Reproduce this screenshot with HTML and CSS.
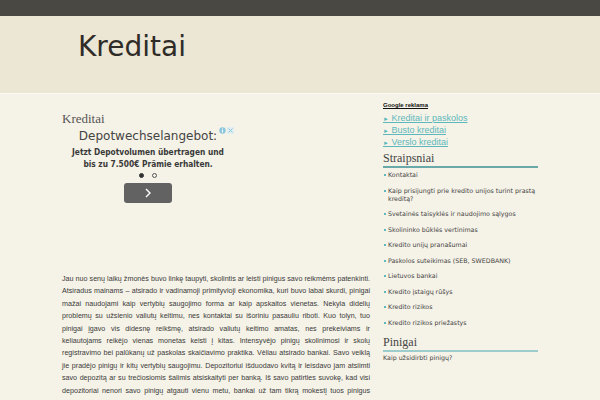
FILE: index.html
```html
<!DOCTYPE html>
<html lang="lt">
<head>
  <meta charset="UTF-8" />
  <meta name="viewport" content="width=device-width, initial-scale=1.0" />
  <title>Kreditai</title>
  <link rel="stylesheet" href="styles.css">
</head>
<body>
  <div class="topbar"></div>

  <header class="header">
    <div class="site-title">Kreditai</div>
  </header>

  <div class="page">
    <main class="content">
      <h2 class="post-title">Kreditai</h2>

      <div class="ad">
        <span class="ad-badge">
          <svg width="7" height="7" viewBox="0 0 7 7"><circle cx="3.5" cy="3.5" r="3.2" fill="#8cc6dc"/><rect x="3" y="3" width="1" height="2.5" fill="#fff"/><rect x="3" y="1.4" width="1" height="1" fill="#fff"/></svg>
          <svg width="7" height="7" viewBox="0 0 7 7"><rect width="7" height="7" fill="#e3eef0"/><path d="M1.5 1.5 L5.5 5.5 M5.5 1.5 L1.5 5.5" stroke="#8cc6dc" stroke-width="1"/></svg>
        </span>
        <div class="ad-head">Depotwechselangebot:</div>
        <div class="ad-text">Jetzt Depotvolumen übertragen und bis zu 7.500€ Prämie erhalten.</div>
        <div class="ad-dots">
          <span class="dot dot-on"></span>
          <span class="dot"></span>
        </div>
        <div class="ad-btn">
          <svg width="8" height="10" viewBox="0 0 8 10"><path d="M2 1 L6 5 L2 9" fill="none" stroke="#fff" stroke-width="1.4"/></svg>
        </div>
      </div>

      <p class="post-text">Jau nuo senų laikų žmonės buvo linkę taupyti, skolintis ar leisti pinigus savo reikmėms patenkinti. Atsiradus mainams – atsirado ir vadinamoji primityvioji ekonomika, kuri buvo labai skurdi, pinigai mažai naudojami kaip vertybių saugojimo forma ar kaip apskaitos vienetas. Nekyla didelių problemų su užsienio valiutų keitimu, nes kontaktai su išoriniu pasauliu riboti. Kuo tolyn, tuo pinigai įgavo vis didesnę reikšmę, atsirado valiutų keitimo amatas, nes prekeiviams ir keliautojams reikėjo vienas monetas keisti į kitas. Intensyvėjo pinigų skolinimosi ir skolų registravimo bei palūkanų už paskolas skaičiavimo praktika. Vėliau atsirado bankai. Savo veiklą jie pradėjo pinigų ir kitų vertybių saugojimu. Depozitoriui išduodavo kvitą ir leisdavo jam atsiimti savo depozitą ar su trečiosiomis šalimis atsiskaityti per banką. Iš savo patirties suvokę, kad visi depozitoriai nenori savo pinigų atgauti vienu metu, bankai už tam tikrą mokestį tuos pinigus pradėjo skolinti kitiems. Skolininkai naudojosi savo banko paskolomis. Taip buvo sukurtas kreditas. Augant bankų ir kitų specializuotų finansinių įmonių skaičiui, didėjo kreditinių pinigų – bankinių vadinamų kreditinių instrumentais. Ateinu kuriami nauji finansiniai produktai ir paslaugos.</p>
    </main>

    <aside class="sidebar">
      <div class="g-title">Google reklama</div>
      <ul class="g-links">
        <li><a href="#"><span class="arrow">►</span> Kreditai ir paskolos</a></li>
        <li><a href="#"><span class="arrow">►</span> Busto kreditai</a></li>
        <li><a href="#"><span class="arrow">►</span> Verslo kreditai</a></li>
      </ul>

      <h3 class="widget-title">Straipsniai</h3>
      <ul class="articles">
        <li>Kontaktai</li>
        <li>Kaip prisijungti prie kredito unijos turint prastą kreditą?</li>
        <li>Svetainės taisyklės ir naudojimo sąlygos</li>
        <li>Skolininko būklės vertinimas</li>
        <li>Kredito unijų pranašumai</li>
        <li>Paskolos suteikimas (SEB, SWEDBANK)</li>
        <li>Lietuvos bankai</li>
        <li>Kredito įstaigų rūšys</li>
        <li>Kredito rizikos</li>
        <li>Kredito rizikos priežastys</li>
      </ul>

      <h3 class="widget-title widget-title-light">Pinigai</h3>
      <div class="money-link">Kaip užsidirbti pinigų?</div>
    </aside>
  </div>
</body>
</html>
```

FILE: styles.css
```css
* {
  margin: 0;
  padding: 0;
  box-sizing: border-box;
}

body {
  background: #f5f2e7;
  color: #333;
  font-family: 'DejaVu Sans', sans-serif;
}

.topbar {
  height: 16px;
  background: #4a4843;
}

.header {
  height: 78px;
  background: #ece6d4;
  border-bottom: 1px solid #faf8f0;
  padding-left: 78px;
  padding-top: 12px;
}

.site-title {
  font-size: 28px;
  color: #2f2c28;
  line-height: 38px;
}

.page {
  display: flex;
  padding-left: 62px;
  gap: 13px;
}

.content {
  width: 308px;
}

.post-title {
  font-family: 'Liberation Serif', serif;
  font-weight: normal;
  font-size: 13px;
  color: #555;
  margin-top: 17px;
  line-height: 16px;
}

.ad {
  position: relative;
  width: 172px;
  height: 144px;
  text-align: center;
}

.ad-badge {
  position: absolute;
  right: 0;
  top: -2px;
  display: flex;
  gap: 1px;
}

.ad-head {
  font-size: 12px;
  color: #444;
  line-height: 14px;
  margin-top: 2px;
}

.ad-text {
  font-family: 'DejaVu Sans Condensed', 'DejaVu Sans', sans-serif;
  font-size: 8.3px;
  font-weight: bold;
  color: #3a3a3a;
  line-height: 12px;
  margin-top: 3px;
  padding: 0 7px;
}

.ad-dots {
  display: flex;
  justify-content: center;
  gap: 8px;
  margin-top: 3px;
}

.dot {
  width: 5px;
  height: 5px;
  border-radius: 50%;
  border: 1px solid #555;
}

.dot-on {
  background: #333;
  border-color: #333;
}

.ad-btn {
  width: 48px;
  height: 20px;
  margin: 5px auto 0 auto;
  background: #626262;
  border-radius: 3px;
  display: flex;
  align-items: center;
  justify-content: center;
}

.post-text {
  font-family: 'Liberation Sans', Arial, sans-serif;
  font-size: 7.15px;
  line-height: 12.4px;
  color: #3a3a3a;
  text-align: justify;
}

.sidebar {
  width: 155px;
  padding-top: 7px;
}

.g-title {
  font-family: 'Liberation Sans', Arial, sans-serif;
  font-size: 6px;
  font-weight: bold;
  text-decoration: underline;
  color: #111;
  line-height: 8px;
}

.g-links {
  list-style: none;
  margin-top: 1px;
}

.g-links li {
  display: block;
  height: 12px;
  line-height: 12px;
}

.g-links a {
  font-family: 'Liberation Sans', Arial, sans-serif;
  font-size: 9px;
  color: #5cb8bc;
}

.arrow {
  font-size: 6px;
}

.widget-title {
  font-family: 'Liberation Serif', serif;
  font-weight: normal;
  font-size: 12px;
  color: #444;
  border-bottom: 2px solid #6aa9aa;
  line-height: 16px;
  margin-top: 4px;
}

.widget-title-light {
  border-bottom-color: #9dcccc;
  margin-top: 0;
}

.articles {
  list-style: none;
  padding-top: 3px;
  margin-bottom: 7px;
}

.articles li {
  font-size: 6.3px;
  line-height: 8px;
  color: #444;
  padding-left: 5px;
  position: relative;
  margin-bottom: 7.5px;
}

.articles li:last-child {
  margin-bottom: 0;
}

.articles li::before {
  content: '';
  position: absolute;
  left: 1px;
  top: 3px;
  width: 2px;
  height: 2px;
  background: #5cb8bc;
}

.money-link {
  font-size: 6.3px;
  line-height: 10px;
  color: #444;
  padding-top: 1px;
}
```
